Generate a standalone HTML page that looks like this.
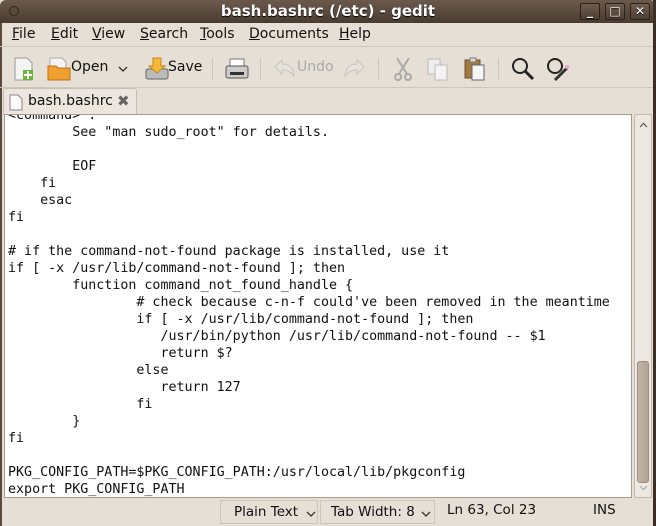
<!DOCTYPE html>
<html style="overflow:hidden;height:526px"><head><style>
*{margin:0;padding:0;box-sizing:border-box}
body{width:656px;height:526px;overflow:hidden;background:#e6dfd6;font-family:"DejaVu Sans","Liberation Sans",sans-serif;font-size:14px;color:#111;position:relative}
.title{position:absolute;left:0;top:0;width:656px;height:23px;background:linear-gradient(#6b5a4c,#4a3b30);border-radius:6px 6px 0 0;color:#fff;font-weight:bold;font-size:15px;text-align:center;line-height:22px;text-shadow:0 1px 1px #000}
.title .dot{position:absolute;left:9px;top:6px;width:10px;height:10px;border-radius:50%;border:1px solid #2f241c;background:#5a4a3e}
.wb{position:absolute;top:3px;width:20px;height:17px;border:1px solid #2b211a;border-radius:2px;background:linear-gradient(#6e5d50,#4e3f34);color:#fff;font-size:12px;line-height:15px;text-align:center}
.menu{position:absolute;top:23px;left:0;width:656px;height:24px;border-bottom:1px solid #cfc6ba}
.menu span{position:absolute;top:3px;font-size:14px}
.menu u{text-decoration:underline}
.tb{position:absolute;top:48px;left:0;width:656px;height:40px;border-bottom:1px solid #cfc6ba}
.tb .l{position:absolute;top:11px;font-size:14px}
.sep{position:absolute;top:10px;width:1px;height:22px;background:#cfc6ba}
.ic{position:absolute;top:8px}
.tab{position:absolute;left:3px;top:88px;width:134px;height:27px;background:#ece6df;border:1px solid #c8bfb3;border-bottom:none;border-radius:3px 3px 0 0}
.edit{position:absolute;left:4px;top:114px;width:628px;height:384px;background:#fff;border:1px solid #a79b8e;overflow:hidden}
pre{font-family:"DejaVu Sans Mono","Liberation Mono",monospace;font-size:13.33px;line-height:17px;margin:-8px 0 0 3px;color:#111}
.sb{position:absolute;left:634px;top:114px;width:18px;height:384px;background:#ede8e2;border:1px solid #c2b8ac;border-radius:2px}
.thumb{position:absolute;left:2px;top:246px;width:12px;height:122px;background:linear-gradient(90deg,#c1b3a5,#b3a495);border:1px solid #9d8e80;border-radius:3px}
.stat{position:absolute;top:498px;left:0;width:656px;height:28px;overflow:hidden;font-size:13.5px}
.cell{position:absolute;top:2px;height:24px;border:1px solid #cfc6ba;line-height:23px;white-space:nowrap}
.cell svg{position:absolute;top:10px}
.rb{position:absolute;right:0;top:0;width:3px;height:526px;background:#3a2e25}
.lb{position:absolute;left:0;top:23px;width:2px;height:503px;background:#5a4a3e}
</style></head><body>
<div class="title"><div class="dot"></div>bash.bashrc (/etc) - gedit
<div class="wb" style="left:580px">_</div><div class="wb" style="left:605px">□</div><div class="wb" style="left:630px">✕</div></div>
<div class="lb"></div>
<div class="menu">
<span style="left:12px"><u>F</u>ile</span><span style="left:51px"><u>E</u>dit</span><span style="left:92px"><u>V</u>iew</span><span style="left:140px"><u>S</u>earch</span><span style="left:200px"><u>T</u>ools</span><span style="left:249px"><u>D</u>ocuments</span><span style="left:339px"><u>H</u>elp</span>
</div>
<div class="tb">
<svg class="ic" style="left:12px" width="26" height="26"><path d="M3 2h12l5 5v17H3z" fill="#f4f4f4" stroke="#999"/><rect x="11" y="14" width="10" height="10" fill="#6bb33a"/><path d="M16 15v8M12 19h8" stroke="#fff" stroke-width="2"/></svg>
<svg class="ic" style="left:46px" width="26" height="26"><path d="M4 2h12l4 4v8H4z" fill="#f3f3f3" stroke="#aaa"/><path d="M2 10h8l2 2h12v12H2z" fill="#f0a030" stroke="#c07010"/></svg>
<span class="l" style="left:71px">Open</span>
<svg style="position:absolute;left:118px;top:18px" width="10" height="6"><path d="M1 1l4 4 4-4" fill="none" stroke="#333" stroke-width="1.3"/></svg>
<svg class="ic" style="left:144px" width="26" height="26"><rect x="2" y="13" width="22" height="10" rx="2" fill="#bbb" stroke="#666"/><path d="M9 2h8v8h4l-8 7-8-7h4z" fill="#f7b83a" stroke="#c68a10"/></svg>
<span class="l" style="left:168px">Save</span>
<div class="sep" style="left:212px"></div>
<svg class="ic" style="left:224px" width="26" height="26"><rect x="6" y="3" width="14" height="8" fill="#fff" stroke="#777"/><rect x="2" y="10" width="22" height="12" rx="2" fill="#ccc" stroke="#555"/><rect x="6" y="16" width="14" height="3" fill="#333"/></svg>
<div class="sep" style="left:260px"></div>
<svg class="ic" style="left:271px" width="26" height="26"><path d="M4 11l7-7v4c8 0 12 5 12 12-3-4-6-6-12-6v4z" fill="#e6e3df" stroke="#c9c4bd"/></svg>
<span class="l" style="left:297px;color:#aaa">Undo</span>
<svg class="ic" style="left:342px" width="26" height="26"><path d="M22 11l-7-7v4C7 8 3 13 3 20c3-4 6-6 12-6v4z" fill="#e6e3df" stroke="#c9c4bd"/></svg>
<div class="sep" style="left:378px"></div>
<svg class="ic" style="left:390px" width="26" height="26" stroke="#aaa" fill="none" stroke-width="2"><path d="M7 2l10 16M19 2L9 18"/><circle cx="8" cy="21" r="3"/><circle cx="18" cy="21" r="3"/></svg>
<svg class="ic" style="left:426px" width="26" height="26"><rect x="2" y="3" width="12" height="15" fill="#eee" stroke="#bbb"/><rect x="9" y="9" width="12" height="15" fill="#f3f3f3" stroke="#bbb"/></svg>
<svg class="ic" style="left:462px" width="26" height="26"><rect x="3" y="4" width="15" height="18" fill="#a07840" stroke="#6e5028"/><rect x="8" y="2" width="6" height="4" fill="#ddd" stroke="#777"/><rect x="10" y="9" width="12" height="15" fill="#f5f5f5" stroke="#666"/></svg>
<div class="sep" style="left:498px"></div>
<svg class="ic" style="left:510px" width="26" height="26" fill="none" stroke="#222" stroke-width="2"><circle cx="10" cy="10" r="7"/><path d="M15 15l8 8" stroke-width="3"/></svg>
<svg class="ic" style="left:545px" width="26" height="26" fill="none" stroke="#222" stroke-width="2"><circle cx="10" cy="10" r="7"/><path d="M10 24l12-12" stroke="#333" stroke-width="3"/><circle cx="22" cy="11" r="2" fill="#e8a0d0" stroke="none"/></svg>
</div>
<div class="tab">
<svg style="position:absolute;left:5px;top:5px" width="14" height="17"><path d="M1 1h8l4 4v11H1z" fill="#fafafa" stroke="#888"/></svg>
<span style="position:absolute;left:24px;top:4px">bash.bashrc</span>
<span style="position:absolute;left:113px;top:3px;color:#666;font-size:15px;font-weight:bold">✖</span>
</div>
<div class="edit"><pre>&lt;command&gt; :
        See "man sudo_root" for details.

        EOF
    fi
    esac
fi

# if the command-not-found package is installed, use it
if [ -x /usr/lib/command-not-found ]; then
        function command_not_found_handle {
                # check because c-n-f could've been removed in the meantime
                if [ -x /usr/lib/command-not-found ]; then
                   /usr/bin/python /usr/lib/command-not-found -- $1
                   return $?
                else
                   return 127
                fi
        }
fi

PKG_CONFIG_PATH=$PKG_CONFIG_PATH:/usr/local/lib/pkgconfig
export PKG_CONFIG_PATH</pre></div>
<div class="sb"><svg style="position:absolute;left:4px;top:7px" width="9" height="6"><path d="M1 5l3.5-3.5L8 5" fill="none" stroke="#555" stroke-width="1.2"/></svg><div class="thumb"></div><svg style="position:absolute;left:4px;top:370px" width="9" height="6"><path d="M1 1l3.5 3.5L8 1" fill="none" stroke="#aaa" stroke-width="1.2"/></svg></div>
<div class="stat">
<div class="cell" style="left:220px;width:98px;padding-left:13px">Plain Text<svg style="left:85px" width="10" height="6"><path d="M1 1l4 4 4-4" fill="none" stroke="#333" stroke-width="1.3"/></svg></div>
<div class="cell" style="left:320px;width:115px;padding-left:10px">Tab Width:&nbsp;8<svg style="left:100px" width="10" height="6"><path d="M1 1l4 4 4-4" fill="none" stroke="#333" stroke-width="1.3"/></svg></div>
<span style="position:absolute;left:447px;top:4px">Ln 63, Col 23</span>
<span style="position:absolute;left:593px;top:4px">INS</span>
</div>
<div class="rb"></div>
</body></html>
